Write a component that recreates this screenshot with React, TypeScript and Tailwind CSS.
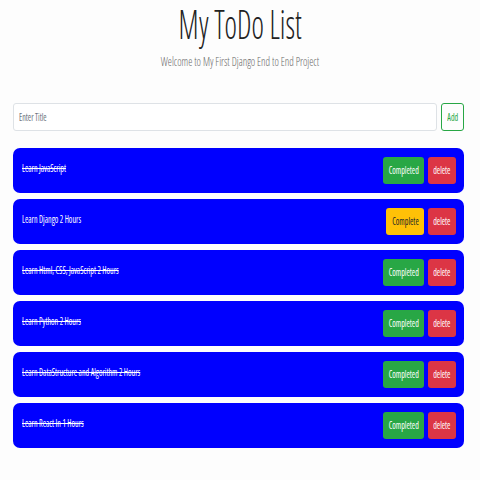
import React from "react";

const todos = [
  { title: "Learn JavaScript", done: true },
  { title: "Learn Django 2 Hours", done: false },
  { title: "Learn Html, CSS, JavaScript 2 Hours", done: true },
  { title: "Learn Python 2 Hours", done: true },
  { title: "Learn DataStructure and Algorithm 2 Hours", done: true },
  { title: "Learn React In 1 Hours", done: true },
];

export default function App() {
  return (
    <div
      className="w-[480px] h-[480px] bg-[#fdfdfd] overflow-hidden"
      style={{ fontFamily: "'Open Sans', 'Liberation Sans', sans-serif" }}
    >
      <div className="flex flex-col items-center">
        <h1 className="text-[40px] leading-[48px] font-light text-[#222] [font-stretch:75%] scale-x-[0.74]">
          My ToDo List
        </h1>
        <p className="mt-[5px] text-[13px] leading-[16px] font-light text-[#666] [font-stretch:75%] scale-x-[0.8]">
          Welcome to My First Django End to End Project
        </p>
      </div>
      <div className="ml-[13px] mr-[16px] mt-[34px]">
        <div className="flex gap-[4px] h-[28px]">
          <div className="flex-1 border border-[#dee2e6] rounded-[3px] bg-white flex items-center pl-[5px]">
            <span className="text-[10px] text-[#6c757d] [font-stretch:75%] origin-left scale-x-[0.8]">Enter Title</span>
          </div>
          <div className="w-[23px] border border-[#28a745] rounded-[3px] flex items-center justify-center">
            <span className="text-[10px] text-[#28a745] [font-stretch:75%] scale-x-[0.8]">Add</span>
          </div>
        </div>
        <div className="mt-[17px] flex flex-col gap-[6px]">
          {todos.map((t) => (
            <div
              key={t.title}
              className="h-[45px] bg-[#0000ff] rounded-[7px] flex items-center justify-between pl-[9px] pr-[8px]"
            >
              <span
                className={`text-[10px] text-white -mt-[5px] [font-stretch:75%] origin-left scale-x-[0.8] ${t.done ? "line-through" : ""}`}
              >
                {t.title}
              </span>
              <div className="flex gap-[4px] h-[27px]">
                {t.done ? (
                  <div className="w-[41px] bg-[#28a745] rounded-[3px] flex items-center justify-center">
                    <span className="text-[10px] text-white [font-stretch:75%] scale-x-[0.8]">Completed</span>
                  </div>
                ) : (
                  <div className="w-[38px] bg-[#ffc107] rounded-[3px] flex items-center justify-center">
                    <span className="text-[10px] text-[#212529] [font-stretch:75%] scale-x-[0.8]">Complete</span>
                  </div>
                )}
                <div className="w-[28px] bg-[#dc3545] rounded-[3px] flex items-center justify-center">
                  <span className="text-[10px] text-white [font-stretch:75%] scale-x-[0.8]">delete</span>
                </div>
              </div>
            </div>
          ))}
        </div>
      </div>
    </div>
  );
}
